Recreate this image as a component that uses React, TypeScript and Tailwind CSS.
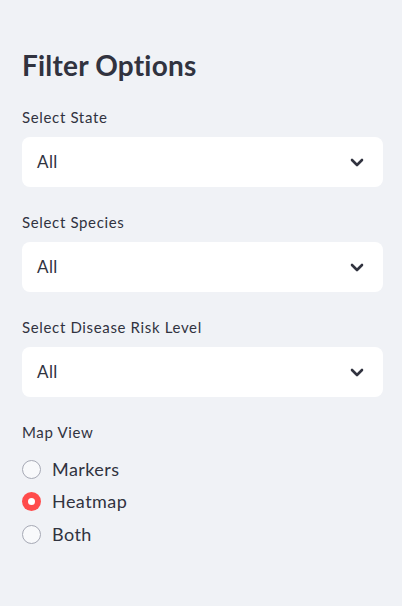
import { useState } from "react";

const selects = ["Select State", "Select Species", "Select Disease Risk Level"];
const views = ["Markers", "Heatmap", "Both"];

function Chevron() {
  return (
    <svg width="14" height="9" viewBox="0 0 14 9" fill="none" aria-hidden="true">
      <path d="M2 2l5 5 5-5" stroke="#31333f" strokeWidth="2.6" strokeLinecap="round" strokeLinejoin="round" />
    </svg>
  );
}

export default function App() {
  const [view, setView] = useState("Heatmap");

  return (
    <div
      className="h-[606px] w-[402px] bg-[#f0f2f6] pt-[47px] pr-[19px] pl-[22px] text-[#31333f]"
      style={{ fontFamily: "Lato, 'Noto Sans', sans-serif" }}
    >
      <h2 className="text-[28px] leading-[36px] font-bold tracking-[0.2px]">Filter Options</h2>

      <div className="mt-[24px] flex flex-col gap-[25px]">
        {selects.map((label) => (
          <div key={label}>
            <p className="mb-[10px] text-[15px] leading-[20px] tracking-[0.65px]">{label}</p>
            <button className="flex h-[50px] w-full items-center justify-between rounded-[8px] bg-white pr-[19px] pl-[15px] text-[17px] tracking-[0.4px]">
              <span>All</span>
              <Chevron />
            </button>
          </div>
        ))}

        <div>
          <p className="text-[15px] leading-[20px] tracking-[0.65px]">Map View</p>
          <div className="mt-[18px] flex flex-col gap-[14.5px]">
            {views.map((v) => {
              const on = v === view;
              return (
                <label
                  key={v}
                  className="flex h-[18px] cursor-pointer items-center gap-[11px] text-[18px] tracking-[0.45px]"
                  onClick={() => setView(v)}
                >
                  <span
                    className={
                      on
                        ? "flex h-[19px] w-[19px] shrink-0 items-center justify-center rounded-full bg-[#ff4b4b]"
                        : "h-[19px] w-[19px] shrink-0 rounded-full border border-[#a6a9b5] bg-[#f8f9fb]"
                    }
                  >
                    {on && <span className="h-[7px] w-[7px] rounded-full bg-white" />}
                  </span>
                  <span>{v}</span>
                </label>
              );
            })}
          </div>
        </div>
      </div>
    </div>
  );
}
